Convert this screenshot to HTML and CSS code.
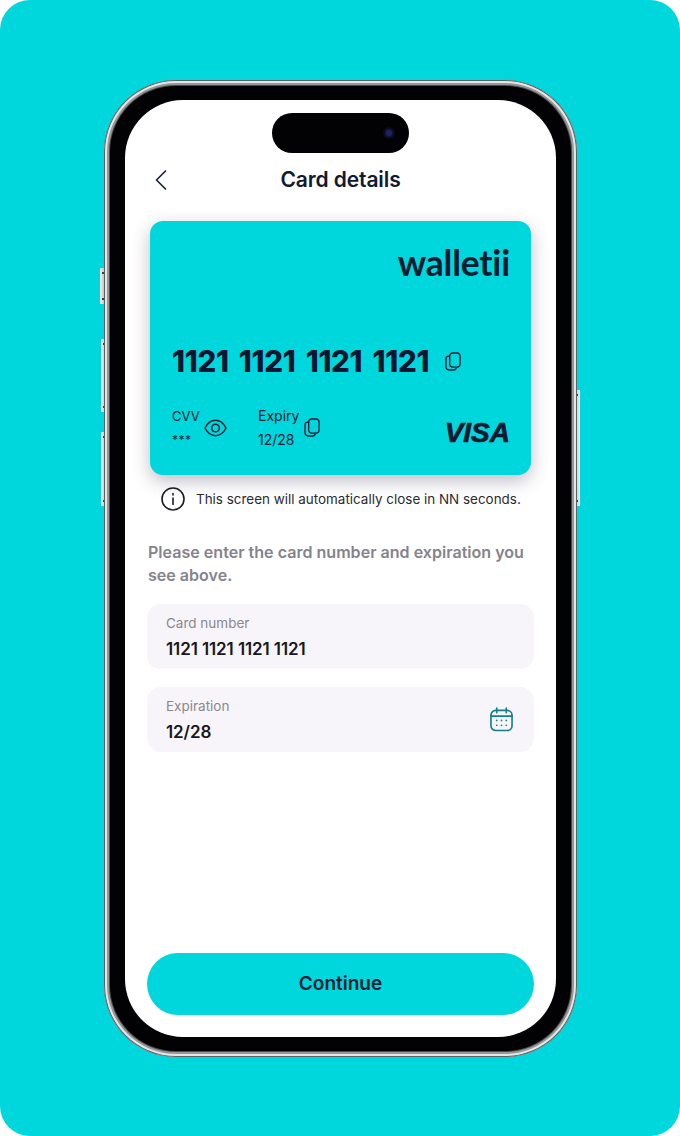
FILE: index.html
```html
<!DOCTYPE html>
<html lang="en">
<head>
<meta charset="utf-8">
<title>Card details</title>
<link rel="stylesheet" href="styles.css">
</head>
<body>
<main class="stage">
  <div class="phone">
    <span class="side side-mute"></span>
    <span class="side side-up"></span>
    <span class="side side-down"></span>
    <span class="side side-power"></span>
    <div class="bezel">
      <div class="screen">
        <div class="island"><span class="lens"></span></div>
        <header class="topbar">
          <svg class="back" viewBox="0 0 12 20" fill="none"><path d="M10.500 1 1.500 10l9 9" /></svg>
          <h1 class="title">Card details</h1>
        </header>
        <section class="card">
          <div class="logo">walletii</div>
          <div class="number-row">
            <span class="number">1121 1121 1121 1121</span>
            <svg class="copy copy-number" viewBox="0 0 17 20" fill="none"><rect x="5" y="1" width="11" height="15" rx="3.500"/><path d="M5 4.200H4A3 3 0 0 0 1 7.200v8.300A3.500 3.500 0 0 0 4.500 19H9a3 3 0 0 0 3-3"/></svg>
          </div>
          <div class="card-foot">
            <div class="meta meta-cvv">
              <div class="meta-text"><span class="cvv-label">CVV</span><span class="stars">***</span></div>
              <svg class="eye" viewBox="0 0 24 18" fill="none"><path d="M1 9c2.800-5.300 6.500-8 11-8s8.200 2.700 11 8c-2.800 5.300-6.500 8-11 8S3.800 14.300 1 9Z"/><circle cx="12" cy="9" r="4"/></svg>
            </div>
            <div class="meta meta-expiry">
              <div class="meta-text"><span>Expiry</span><span>12/28</span></div>
              <svg class="copy copy-expiry" viewBox="0 0 17 20" fill="none"><rect x="5" y="1" width="11" height="15" rx="3.500"/><path d="M5 4.200H4A3 3 0 0 0 1 7.200v8.300A3.500 3.500 0 0 0 4.500 19H9a3 3 0 0 0 3-3"/></svg>
            </div>
            <div class="visa">VISA</div>
          </div>
        </section>
        <div class="notice">
          <svg class="info" viewBox="0 0 24 24" fill="none"><circle cx="12" cy="12" r="11"/><path d="M12 11v6.500M12 6.500v1.500"/></svg>
          <span>This screen will automatically close in NN seconds.</span>
        </div>
        <p class="prompt">Please enter the card number and expiration you see above.</p>
        <div class="field">
          <div class="field-text"><span class="field-label">Card number</span><span class="field-value">1121 1121 1121 1121</span></div>
        </div>
        <div class="field">
          <div class="field-text"><span class="field-label">Expiration</span><span class="field-value">12/28</span></div>
          <svg class="calendar" viewBox="0 0 24 26" fill="none"><rect x="1" y="3.500" width="22" height="21" rx="5"/><path d="M1 9.500h22M7 1v5M17 1v5"/><path class="dots" d="M7 14h.01M12 14h.01M17 14h.01M7 19h.01M12 19h.01M17 19h.01"/></svg>
        </div>
        <button class="cta" type="button">Continue</button>
      </div>
    </div>
  </div>
</main>
</body>
</html>
```
FILE: styles.css
```css
* { box-sizing: border-box; }
html, body { margin: 0; padding: 0; background: #fff; }
.stage {
  width: 680px;
  height: 1136px;
  background: #00d7dd;
  border-radius: 30px;
  padding-top: 80px;
  display: flex;
  justify-content: center;
  overflow: hidden;
  font-family: Inter, "Noto Sans", sans-serif;
}
.phone { position: relative; width: 473px; height: 977px; margin-left: 1px; }
.side {
  position: absolute;
  width: 5px;
  border-radius: 1px;
  background:
    linear-gradient(#3f3f42, #3f3f42) 2px 4px / 3px 2px no-repeat,
    linear-gradient(#3f3f42, #3f3f42) 2px calc(100% - 4px) / 3px 2px no-repeat,
    linear-gradient(90deg, #f4f4f4, #b5b5b5);
}
.side-mute { left: -4px; top: 188px; height: 36px; }
.side-up { left: -3px; top: 259px; height: 73px; }
.side-down { left: -3px; top: 352px; height: 74px; }
.side-power { right: -3px; top: 310px; height: 116px; transform: scaleX(-1); }
.bezel {
  position: relative;
  width: 100%;
  height: 100%;
  background: #020104;
  border-radius: 72px;
  padding: 20px 21px;
  box-shadow: inset 0 0 0 1px #5a6265, inset 0 0 0 3px #e6e6e6, inset 0 0 0 5px #97979a, inset 0 0 0 6px #4a4a4d;
}
.screen {
  position: relative;
  height: 100%;
  background: #fff;
  border-radius: 58px;
  padding: 0 22px 22px;
  display: flex;
  flex-direction: column;
  overflow: hidden;
}
.island {
  position: absolute;
  left: 147px;
  top: 13px;
  width: 137px;
  height: 40px;
  background: #020104;
  border-radius: 20px;
}
.lens {
  position: absolute;
  right: 14px;
  top: 14px;
  width: 12px;
  height: 12px;
  border-radius: 50%;
  background: radial-gradient(circle, #1c2260 0 25%, #0b0b20 55%, #020104 100%);
}
.topbar { position: relative; height: 121px; padding-top: 68px; flex: none; }
.back {
  position: absolute;
  left: 8px;
  top: 70px;
  width: 12px;
  height: 20px;
  stroke: #1b2438;
  stroke-width: 1.700;
  stroke-linecap: round;
  stroke-linejoin: round;
}
.title {
  margin: 0;
  text-align: center;
  font-size: 21px;
  line-height: 24px;
  font-weight: 600;
  color: #101b30;
  letter-spacing: -0.1px;
}
.card {
  flex: none;
  height: 254px;
  margin: 0 3px;
  padding: 22px 21px 0 22px;
  background: #00d7dd;
  border-radius: 13px;
  box-shadow: 0 6px 18px rgba(60, 50, 80, .32);
  color: #0e1c33;
  display: flex;
  flex-direction: column;
}
.logo {
  align-self: flex-end;
  font-family: Lato, sans-serif;
  font-weight: 700;
  font-size: 35.500px;
  line-height: 40px;
  letter-spacing: -0.2px;
}
.number-row { display: flex; align-items: center; gap: 16px; margin-top: 60px; height: 36px; }
.number { font-size: 29.500px; font-weight: 800; line-height: 36px; letter-spacing: -0.3px; word-spacing: 4px; white-space: nowrap; color: #0b1730; }
.copy { stroke: #0e1c33; stroke-width: 1.400; }
.copy-number { width: 16px; height: 19px; margin-top: 1px; }
.card-foot { display: flex; align-items: flex-start; margin-top: 28px; font-size: 14px; }
.meta { display: flex; align-items: center; }
.meta-text { display: flex; flex-direction: column; gap: 6px; line-height: 18px; }
.meta-cvv { width: 86px; gap: 4px; }
.cvv-label { font-size: 13px; }
.stars { font-size: 12px; letter-spacing: .5px; }
.eye { width: 23px; height: 18px; stroke: #0e1c33; stroke-width: 1.500; }
.meta-expiry { gap: 5px; }
.copy-expiry { width: 16px; height: 19px; margin-top: -1px; }
.visa {
  margin-left: auto;
  margin-top: 10px;
  margin-right: 0;
  font-family: "Liberation Sans", sans-serif;
  font-style: italic;
  font-weight: 700;
  font-size: 28px;
  line-height: 32px;
  letter-spacing: 0;
  color: #121a30;
  -webkit-text-stroke: .7px #121a30;
}
.notice {
  flex: none;
  display: flex;
  align-items: center;
  gap: 11px;
  margin: 12px 0 0 14px;
  height: 24px;
  font-size: 13.450px;
  color: #2a2a30;
  white-space: nowrap;
}
.info { width: 24px; height: 24px; stroke: #1c1c22; stroke-width: 1.600; flex: none; stroke-linecap: round; }
.prompt {
  flex: none;
  margin: 30px 0 17px;
  padding-left: 1px;
  font-size: 16.070px;
  line-height: 23px;
  font-weight: 600;
  color: #85838b;
}
.field {
  flex: none;
  height: 65px;
  margin-bottom: 18px;
  padding: 0 21px 0 19px;
  border-radius: 14px;
  background: #f7f5f9;
  display: flex;
  align-items: center;
  justify-content: space-between;
}
.field-text { display: flex; flex-direction: column; gap: 8px; }
.field-label { font-size: 13.500px; line-height: 18px; color: #8a888f; margin-top: -1px; }
.field-value { font-size: 17px; line-height: 18px; font-weight: 600; color: #17171c; letter-spacing: -0.1px; }
.calendar { width: 23px; height: 25px; stroke: #137f87; stroke-width: 1.700; stroke-linecap: round; }
.dots { stroke-width: 1.800; }
.cta {
  margin-top: auto;
  flex: none;
  height: 62px;
  width: 100%;
  border: 0;
  border-radius: 31px;
  background: #00d7dd;
  color: #0a1f33;
  font-family: Inter, sans-serif;
  font-size: 19px;
  font-weight: 600;
  padding-bottom: 2px;
}
```
